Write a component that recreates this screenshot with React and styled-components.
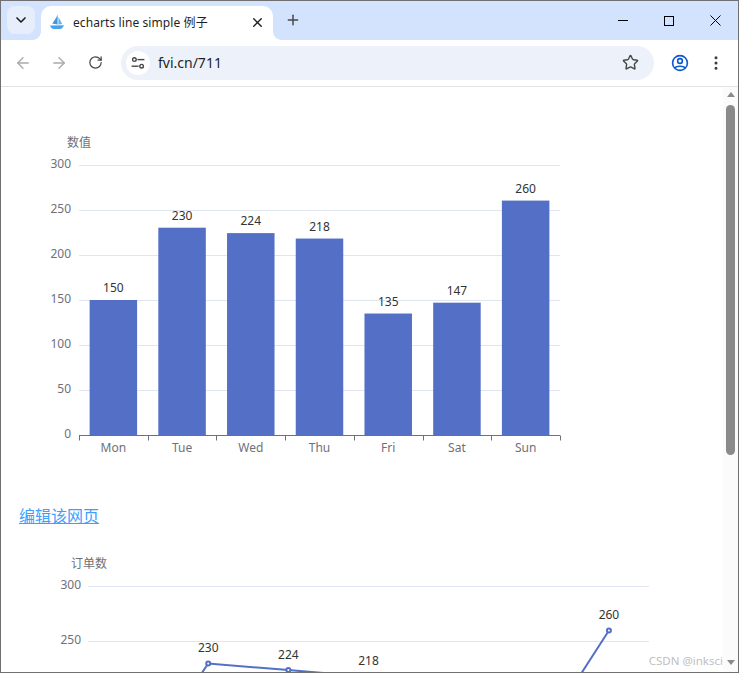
import React from 'react';
import styled, { createGlobalStyle } from 'styled-components';
import { ArrowLeft, ArrowRight, ChevronDown, EllipsisVertical, Plus, RotateCw, Star, X } from 'lucide-react';

const GlobalStyle = createGlobalStyle`
  html, body {
    margin: 0;
    padding: 0;
    background: #fff;
    overflow: hidden;
  }
`;

const Frame = styled.div`
  position: relative;
  box-sizing: border-box;
  width: 739px;
  height: 673px;
  border: 1px solid #707070;
  display: flex;
  flex-direction: column;
  overflow: hidden;
  font-family: "Noto Sans", "Noto Sans CJK SC", sans-serif;
`;

const TabStrip = styled.div`
  flex: none;
  height: 39px;
  background: #d3e3fd;
  display: flex;
  align-items: flex-start;
  padding: 5px 0 0 6px;
  box-sizing: border-box;
`;

const TabSearch = styled.div`
  width: 28px;
  height: 28px;
  border-radius: 8px;
  background: #e6eefc;
  color: #1f1f1f;
  display: flex;
  align-items: center;
  justify-content: center;
`;

const Tab = styled.div`
  position: relative;
  width: 232px;
  height: 34px;
  margin-left: 6px;
  box-sizing: border-box;
  padding: 0 8px 2px 8px;
  background: #fff;
  border-radius: 10px 10px 0 0;
  display: flex;
  align-items: center;
  color: #1f1f1f;
  font-size: 12px;

  &::before,
  &::after {
    content: '';
    position: absolute;
    bottom: 0;
    width: 8px;
    height: 8px;
  }
  &::before {
    left: -8px;
    background: radial-gradient(circle at 0 0, #d3e3fd 7.5px, #fff 8px);
  }
  &::after {
    right: -8px;
    background: radial-gradient(circle at 100% 0, #d3e3fd 7.5px, #fff 8px);
  }
`;

const TabTitle = styled.span`
  flex: 1;
  margin-left: 8px;
  letter-spacing: 0.09px;
  white-space: nowrap;
`;

const NewTab = styled.div`
  margin: 4px 0 0 10px;
  width: 20px;
  height: 20px;
  display: flex;
  align-items: center;
  justify-content: center;
  color: #474747;
`;

const WindowControls = styled.div`
  margin-left: auto;
  display: flex;
`;

const WindowButton = styled.div`
  width: 46px;
  height: 29px;
  display: flex;
  align-items: center;
  justify-content: center;
`;

const Toolbar = styled.div`
  flex: none;
  height: 47px;
  box-sizing: border-box;
  background: #fff;
  border-bottom: 1px solid #e1e3e6;
  border-radius: 8px 8px 0 0;
  display: flex;
  align-items: center;
  padding: 0 0 1px 4px;
`;

const NavButton = styled.div`
  width: 36px;
  height: 32px;
  display: flex;
  align-items: center;
  justify-content: center;
  color: ${p => (p.$muted ? '#a9abae' : '#474747')};
`;

const Omnibox = styled.div`
  flex: none;
  width: 533px;
  height: 34px;
  margin-left: 8px;
  box-sizing: border-box;
  border-radius: 17px;
  background: #ecf1fa;
  display: flex;
  align-items: center;
  padding: 0 15px 0 5px;
`;

const SiteInfo = styled.div`
  width: 24px;
  height: 24px;
  border-radius: 50%;
  background: #fff;
  display: flex;
  align-items: center;
  justify-content: center;
`;

const Url = styled.span`
  flex: 1;
  margin-left: 8px;
  font-size: 14px;
  color: #1f1f1f;
`;

const ProfileButton = styled.div`
  margin-left: 8px;
  width: 36px;
  display: flex;
  justify-content: center;
`;

const Viewport = styled.div`
  flex: 1;
  min-height: 0;
  display: flex;
`;

const Page = styled.div`
  flex: 1;
  min-width: 0;
  overflow: hidden;
`;

const ChartSvg = styled.svg`
  display: block;
  font-family: "Noto Sans", "Noto Sans CJK SC", sans-serif;
  font-size: 12px;
`;

const EditLink = styled.a`
  display: block;
  width: fit-content;
  height: 24px;
  line-height: 24px;
  margin: 16px 0 18px 18px;
  font-family: "Noto Sans CJK SC", sans-serif;
  font-size: 16px;
  color: #409eff;
  text-decoration: underline;
`;

const Scrollbar = styled.div`
  flex: none;
  width: 15px;
  background: #fbfbfb;
  display: flex;
  flex-direction: column;
  align-items: center;
  padding-top: 5px;
  box-sizing: border-box;
`;

const ArrowUp = styled.div`
  width: 0;
  height: 0;
  border-left: 4.5px solid transparent;
  border-right: 4.5px solid transparent;
  border-bottom: 5px solid #8a8a8a;
`;

const ArrowDown = styled(ArrowUp)`
  border-bottom: 0;
  border-top: 5px solid #8a8a8a;
  margin-top: auto;
  margin-bottom: 7px;
`;

const Thumb = styled.div`
  width: 9px;
  height: 350px;
  margin-top: 8px;
  border-radius: 5px;
  background: #8a8a8a;
`;

const Watermark = styled.div`
  position: absolute;
  right: 15px;
  bottom: 3px;
  font-size: 11.5px;
  line-height: 16px;
  color: #c0c0c0;
  white-space: nowrap;
`;

const EdgeMark = styled.div`
  position: absolute;
  left: -1px;
  width: 1px;
  background: ${p => p.$color};
`;

const days = ['Mon', 'Tue', 'Wed', 'Thu', 'Fri', 'Sat', 'Sun'];
const values = [150, 230, 224, 218, 135, 147, 260];
const lineValues = [122, 230, 224, 218, 135, 147, 260];
const AXIS = '#6e7079';
const GRID = '#e0e6f1';
const SERIES = '#5470c6';

// chart coordinates are measured in page pixels, the group shifts them into the svg
const BarChart = () => {
  const left = 79;
  const right = 560;
  const bottom = 435.5;
  const band = (right - left) / 7;
  const y = v => bottom - v * 0.9;
  const barTop = v => bottom - v * 0.9035;
  return (
    <ChartSvg width="640" height="400">
      <g transform="translate(-1 -87)">
        <text x="67" y="147" fill={AXIS}>数值</text>
        {[0, 50, 100, 150, 200, 250, 300].map(t => (
          <g key={t}>
            {t > 0 && <line x1={left} x2={right} y1={y(t)} y2={y(t)} stroke={GRID} />}
            <text x="71" y={y(t) + 2.5} textAnchor="end" fill={AXIS}>{t}</text>
          </g>
        ))}
        {values.map((v, i) => {
          const cx = left + band * (i + 0.5);
          return (
            <g key={days[i]}>
              <rect x={cx - band * 0.35 + 0.3} y={barTop(v)} width={band * 0.7 - 0.6} height={bottom - barTop(v)} fill={SERIES} />
              <text x={cx} y={barTop(v) - 8} textAnchor="middle" fill="#333">{v}</text>
              <text x={cx} y="452" textAnchor="middle" fill={AXIS}>{days[i]}</text>
            </g>
          );
        })}
        <line x1={left} x2={right} y1={bottom} y2={bottom} stroke={AXIS} />
        {days.concat('').map((d, i) => {
          const x = Math.round(left + band * i) + 0.5;
          return <line key={i} x1={x} x2={x} y1={bottom} y2={bottom + 5} stroke={AXIS} />;
        })}
      </g>
    </ChartSvg>
  );
};

const LineChart = () => {
  const left = 88;
  const right = 649;
  const band = (right - left) / 7;
  const y = v => 916.5 - v * 1.1;
  const points = lineValues.map((v, i) => [left + band * (i + 0.5), y(v)]);
  return (
    <ChartSvg width="700" height="127">
      <g transform="translate(-1 -545)">
        <text x="71" y="568" fill={AXIS}>订单数</text>
        {[250, 300].map(t => (
          <g key={t}>
            <line x1={left} x2={right} y1={Math.floor(y(t)) + 0.5} y2={Math.floor(y(t)) + 0.5} stroke={GRID} />
            <text x="81" y={y(t) + 2.5} textAnchor="end" fill={AXIS}>{t}</text>
          </g>
        ))}
        <polyline points={points.map(p => p.join(',')).join(' ')} fill="none" stroke={SERIES} strokeWidth="2" />
        {/* only the top of this chart is above the fold */}
        {points.map(([x, py], i) => (py < 680 ? (
          <g key={days[i]}>
            <circle cx={x} cy={py} r="2" fill="#fff" stroke={SERIES} strokeWidth="2" />
            <text x={x} y={py - 11.6} textAnchor="middle" fill="#333">{values[i]}</text>
          </g>
        ) : null))}
      </g>
    </ChartSvg>
  );
};

const SailLogo = () => (
  <svg width="16" height="16" viewBox="0 0 16 16">
    <path d="M8.6 0.4 C7.4 3.6 5.2 7 3.2 9.6 L8.6 10.4 Z" fill="#3f97e4" />
    <path d="M9.4 3 C10.8 5.4 12.4 8 13.2 10 L9.4 10.5 Z" fill="#66b4ee" />
    <path d="M1 11.6 L15 11.2 C14 13.6 12.6 15 11.2 15 L4.4 15 C3 15 1.8 13.6 1 11.6 Z" fill="#4aa3ea" />
  </svg>
);

const SiteTuneIcon = () => (
  <svg width="16" height="16" viewBox="0 0 16 16" fill="none" stroke="#474747" strokeWidth="1.4">
    <circle cx="4.4" cy="4.6" r="1.8" />
    <path d="M7.4 4.6 H14.4" />
    <circle cx="11.6" cy="11.2" r="1.8" />
    <path d="M1.6 11.2 H8.6" />
  </svg>
);

const ProfileIcon = () => (
  <svg width="18" height="18" viewBox="0 0 18 18" fill="none" stroke="#0b57d0" strokeWidth="1.6">
    <circle cx="9" cy="9" r="7.4" />
    <circle cx="9" cy="7" r="2.4" />
    <path d="M3.8 14 C5.4 11.6 12.6 11.6 14.2 14" />
  </svg>
);

const MinimizeIcon = () => (
  <svg width="10" height="10" viewBox="0 0 10 10" stroke="#000" fill="none">
    <path d="M0 4.5 H10" />
  </svg>
);

const MaximizeIcon = () => (
  <svg width="10" height="10" viewBox="0 0 10 10" stroke="#000" fill="none">
    <rect x="0.5" y="0.5" width="9" height="9" />
  </svg>
);

const CloseIcon = () => (
  <svg width="11" height="11" viewBox="0 0 11 11" stroke="#000" fill="none">
    <path d="M0.5 0.5 L10.5 10.5 M10.5 0.5 L0.5 10.5" />
  </svg>
);

const edgeMarks = [
  [141, 6, '#1c1c78'], [156, 5, '#1c1c78'], [183, 11, '#1c1c78'], [198, 12, '#1c1c78'],
  [277, 5, '#1c1c78'], [521, 1, '#222'], [581, 1, '#222'], [593, 2, '#222'],
];

const App = () => (
  <>
    <GlobalStyle />
    <Frame>
      <TabStrip>
        <TabSearch><ChevronDown size={16} strokeWidth={2.5} /></TabSearch>
        <Tab>
          <SailLogo />
          <TabTitle>echarts line simple 例子</TabTitle>
          <X size={15} strokeWidth={2.2} />
        </Tab>
        <NewTab><Plus size={16} strokeWidth={2.2} /></NewTab>
        <WindowControls>
          <WindowButton><MinimizeIcon /></WindowButton>
          <WindowButton><MaximizeIcon /></WindowButton>
          <WindowButton><CloseIcon /></WindowButton>
        </WindowControls>
      </TabStrip>
      <Toolbar>
        <NavButton $muted><ArrowLeft size={18} strokeWidth={1.8} /></NavButton>
        <NavButton $muted><ArrowRight size={18} strokeWidth={1.8} /></NavButton>
        <NavButton><RotateCw size={15} strokeWidth={2} /></NavButton>
        <Omnibox>
          <SiteInfo><SiteTuneIcon /></SiteInfo>
          <Url>fvi.cn/711</Url>
          <Star size={17} strokeWidth={2} color="#474747" />
        </Omnibox>
        <ProfileButton><ProfileIcon /></ProfileButton>
        <NavButton><EllipsisVertical size={18} strokeWidth={2} color="#3c3c3c" /></NavButton>
      </Toolbar>
      <Viewport>
        <Page>
          <BarChart />
          <EditLink href="#">编辑该网页</EditLink>
          <LineChart />
        </Page>
        <Scrollbar>
          <ArrowUp />
          <Thumb />
          <ArrowDown />
        </Scrollbar>
      </Viewport>
      <Watermark>CSDN @inksci</Watermark>
      {edgeMarks.map(([top, height, color]) => (
        <EdgeMark key={top} style={{ top, height }} $color={color} />
      ))}
    </Frame>
  </>
);

export default App;
